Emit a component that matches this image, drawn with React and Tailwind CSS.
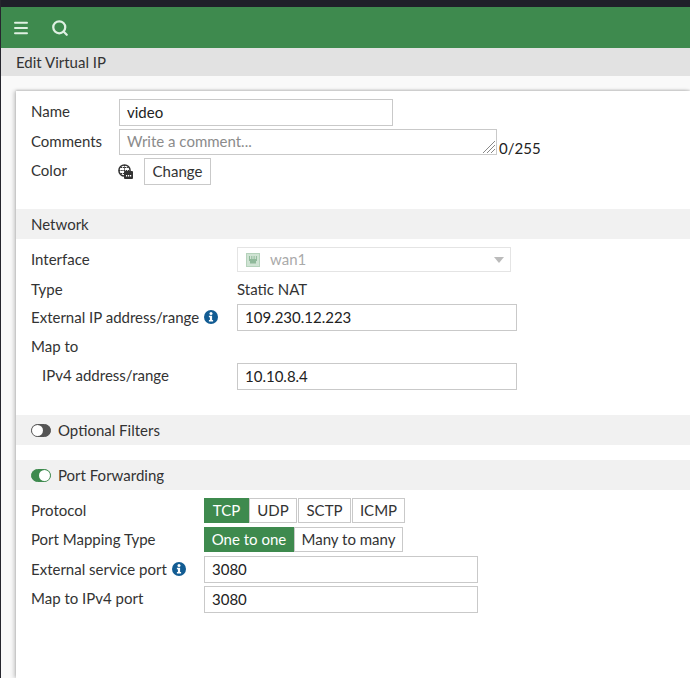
import React from 'react';
import { Menu, Search } from 'lucide-react';

const InfoIcon = () => (
  <svg width="14" height="14" viewBox="0 0 14 14" className="shrink-0">
    <circle cx="7" cy="7" r="7" fill="#125c93" />
    <circle cx="7" cy="3.4" r="1.5" fill="#fff" />
    <path d="M4.9 5.8h3.2v4.3h1v1.5H4.9v-1.5h1V7.3h-1z" fill="#fff" />
  </svg>
);

const GlobeIcon = () => (
  <svg width="15" height="15" viewBox="0 0 15 15" className="shrink-0">
    <circle cx="6.5" cy="6.5" r="5.6" fill="none" stroke="#333" strokeWidth="1.5" />
    <path d="M1 6.5h11M6.5 1v11M2.5 3.5h8M2.5 9.5h8" stroke="#333" strokeWidth="1" strokeDasharray="1.5 .7" />
    <rect x="6" y="7" width="9" height="8" rx="1" fill="#333" />
    <path d="M8 11.8h1.2M10 11.8h1.2M12 11.8h1.2" stroke="#fff" strokeWidth="1.5" />
  </svg>
);

const PortIcon = () => (
  <svg width="14" height="14" viewBox="0 0 14 14" className="shrink-0">
    <rect x="0.5" y="0.5" width="13" height="13" fill="#cfe3d3" stroke="#b5d2bb" />
    <path d="M3 3h8v5h-1v2.5H4V8H3z" fill="#8fb99a" />
    <path d="M4.5 3v3M6.2 3v3M7.9 3v3M9.6 3v3" stroke="#e3efe5" strokeWidth=".8" />
  </svg>
);

const Toggle = ({ on }) => (
  <span className={`flex h-[13px] w-5 rounded-full border shrink-0 items-center ${on ? 'bg-[#3e8a4e] border-[#3e8a4e] justify-end' : 'bg-[#555] border-[#555] justify-start'}`}>
    <span className="block h-[11px] w-[11px] rounded-full bg-white" />
  </span>
);

const Field = ({ value, width, className = '' }) => (
  <div className={`flex h-[27px] items-center border border-[#c9c9c9] bg-white pb-[2px] pl-[7px] text-[#222] ${width} ${className}`}>{value}</div>
);

const Section = ({ children, className = '' }) => (
  <div className={`flex h-[30px] items-center gap-[7px] bg-[#f1f1f1] pl-[15px] text-[#333] ${className}`}>{children}</div>
);

const Segment = ({ items, active }) => (
  <div className="flex h-[25px]">
    {items.map((item, i) => (
      <div
        key={item.label}
        className={`flex h-full items-center justify-center pb-[2px] ${item.width} ${i === active ? 'bg-[#3e8a4e] text-white' : 'border border-[#c9c9c9] bg-white text-[#333]'} ${i > 1 ? 'ml-[1px]' : ''}`}
      >
        {item.label}
      </div>
    ))}
  </div>
);

export default function App() {
  return (
    <div className="h-[678px] w-[690px] overflow-hidden border-l border-[#26262e] bg-[#f9f9f9] text-[15px] leading-[18px] text-[#333] font-['Lato','Liberation_Sans',sans-serif]">
      <div className="h-[7px] bg-[#1f1f29]" />
      <header className="flex h-[41px] items-center bg-[#3e8a4e] pl-[11px] text-[#dff0e2]">
        <Menu size={18} strokeWidth={2.6} />
        <Search size={18} strokeWidth={3} className="ml-[21px]" />
      </header>
      <div className="flex h-[28px] items-center bg-[#e2e2e2] pl-[15px] text-[#333]">Edit Virtual IP</div>

      <main className="ml-[15px] mt-[15px] h-[587px] bg-white pt-2 shadow-[-2px_0_4px_rgba(0,0,0,0.2),0_-1px_2px_rgba(0,0,0,0.15)]">
        <div className="flex items-center pl-[15px]">
          <span className="w-[88px] pb-[4px]">Name</span>
          <Field value="video" width="w-[274px]" />
        </div>
        <div className="mt-[3px] flex h-[26px] items-start pl-[15px]">
          <span className="mt-[3px] w-[88px]">Comments</span>
          <div className="relative flex h-[26px] w-[378px] items-center border border-[#c9c9c9] pb-[2px] pl-[7px] text-[#8b8b8b]">
            Write a comment...
            <svg width="14" height="14" viewBox="0 0 14 14" className="absolute bottom-0 right-0">
              <path d="M1 13 13 1M5 13l8-8M9 13l4-4" stroke="#888" strokeWidth="1" />
            </svg>
          </div>
          <span className="ml-[2px] mt-[10px] text-[#222]">0/255</span>
        </div>
        <div className="mt-[3px] flex items-center pl-[15px]">
          <span className="w-[87px] pb-[4px]">Color</span>
          <GlobeIcon />
          <div className="ml-[11px] flex h-[27px] w-[67px] items-center justify-center border border-[#c9c9c9] pb-[2px] text-[#333]">Change</div>
        </div>

        <Section className="mt-[24px]">Network</Section>
        <div className="mt-2 flex items-center pl-[15px]">
          <span className="w-[206px] pb-[2px]">Interface</span>
          <div className="flex h-[25px] w-[274px] items-center border border-[#e4e4e4] pl-[8px] text-[#aaa]">
            <PortIcon />
            <span className="ml-[10px] pb-[2px]">wan1</span>
            <span className="ml-auto mr-[6px] h-0 w-0 border-x-[5px] border-t-[6px] border-x-transparent border-t-[#bbb]" />
          </div>
        </div>
        <div className="mt-[8px] flex items-center pl-[15px]">
          <span className="w-[206px]">Type</span>
          <span>Static NAT</span>
        </div>
        <div className="mt-[6px] flex h-[27px] items-center pl-[15px]">
          <span className="flex w-[206px] items-center gap-[5px] pb-[2px]">External IP address/range <InfoIcon /></span>
          <Field value="109.230.12.223" width="w-[280px]" />
        </div>
        <div className="mt-[6px] pl-[15px]">Map to</div>
        <div className="mt-[8px] flex items-center pl-[26px]">
          <span className="w-[195px] pb-[4px]">IPv4 address/range</span>
          <Field value="10.10.8.4" width="w-[280px]" />
        </div>

        <Section className="mt-[25px]"><Toggle />Optional Filters</Section>
        <Section className="mt-[15px]"><Toggle on />Port Forwarding</Section>

        <div className="mt-2 flex items-center pl-[15px]">
          <span className="w-[173px] pb-[2px]">Protocol</span>
          <Segment
            active={0}
            items={[
              { label: 'TCP', width: 'w-[45px]' },
              { label: 'UDP', width: 'w-[48px]' },
              { label: 'SCTP', width: 'w-[53px]' },
              { label: 'ICMP', width: 'w-[53px]' },
            ]}
          />
        </div>
        <div className="mt-[4px] flex items-center pl-[15px]">
          <span className="w-[173px] pb-[2px]">Port Mapping Type</span>
          <Segment
            active={0}
            items={[
              { label: 'One to one', width: 'w-[90px]' },
              { label: 'Many to many', width: 'w-[109px]' },
            ]}
          />
        </div>
        <div className="mt-[4px] flex items-center pl-[15px]">
          <span className="flex w-[173px] items-center gap-[5px] pb-[2px]">External service port <InfoIcon /></span>
          <Field value="3080" width="w-[274px]" />
        </div>
        <div className="mt-[3px] flex items-center pl-[15px]">
          <span className="w-[173px] pb-[4px]">Map to IPv4 port</span>
          <Field value="3080" width="w-[274px]" />
        </div>
      </main>
    </div>
  );
}
